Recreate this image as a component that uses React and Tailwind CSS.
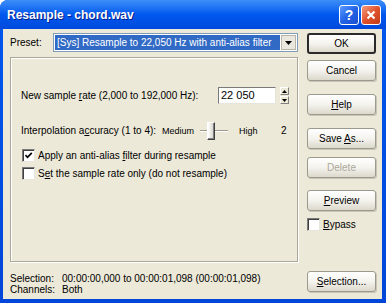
import React from "react";

/* XP-ish push button */
const Btn = ({ children, isDefault, disabled, className = "" }) => (
  <div
    className={`h-[21px] w-[69px] flex items-center justify-center rounded-[3px]
                bg-gradient-to-b from-white via-[#f4f3ee] to-[#dcd8cb]
                ${isDefault ? "border-2 border-[#2a2a2a]" : "border border-[#9c9a8e] shadow-[1px_1px_0_#c9c5b6]"}
                ${disabled ? "text-[#aca899]" : "text-black"} ${className}`}
  >
    {children}
  </div>
);

/* Classic sunken checkbox */
const Check = ({ checked }) => (
  <div className="w-[13px] h-[13px] shrink-0 bg-white border border-t-[#7a7a7a] border-l-[#7a7a7a] border-b-[#e8e6dc] border-r-[#e8e6dc] shadow-[inset_1px_1px_0_#404040] flex items-center justify-center">
    {checked && (
      <svg width="9" height="9" viewBox="0 0 9 9">
        <polyline points="1.5,4.2 3.5,6.3 7.8,1.8" fill="none" stroke="#000" strokeWidth="1.7" />
      </svg>
    )}
  </div>
);

const SpinArrow = ({ up }) => (
  <div className="h-[8px] w-[9px] bg-[#ECE9D8] border border-t-white border-l-white border-b-[#808080] border-r-[#808080] flex items-center justify-center">
    <svg width="5" height="3" viewBox="0 0 5 3">
      <polygon points={up ? "0,3 5,3 2.5,0" : "0,0 5,0 2.5,3"} fill="#000" />
    </svg>
  </div>
);

export default function App() {
  return (
    <div className="w-[386px] h-[303px] bg-white font-['Liberation_Sans',Arial,sans-serif] text-[10px] leading-none text-black">
      <div className="w-full h-full flex flex-col rounded-t-[8px] overflow-hidden bg-gradient-to-b from-[#0058ee] to-[#0046d8]">
        {/* Title bar */}
        <div className="h-[29px] shrink-0 flex items-center justify-between pl-[7px] pr-[5px] bg-gradient-to-b from-[#3c8ef8] via-[#0058ee] to-[#0049dc]">
          <span className="text-white font-bold text-[12px] [text-shadow:1px_1px_0_#0a1e8a]">Resample - chord.wav</span>
          <div className="flex gap-[2px]">
            <div className="w-[20px] h-[20px] rounded-[3px] border border-white bg-gradient-to-br from-[#5d9bff] via-[#2463e6] to-[#1b4fd1] flex items-center justify-center text-white font-bold text-[14px]">
              ?
            </div>
            <div className="w-[20px] h-[20px] rounded-[3px] border border-white bg-gradient-to-br from-[#f39a7a] via-[#e0522c] to-[#c43a16] flex items-center justify-center">
              <svg width="10" height="10" viewBox="0 0 10 10">
                <path d="M1.5 1.5 L8.5 8.5 M8.5 1.5 L1.5 8.5" stroke="#fff" strokeWidth="2.2" />
              </svg>
            </div>
          </div>
        </div>

        {/* Client area */}
        <div className="flex-1 ml-[3px] mr-[4px] mb-[4px] bg-[#ECE9D8] flex">
          {/* Left column */}
          <div className="pl-[7px] pt-[4px] w-[295px] flex flex-col">
            <div className="h-[19px] flex items-center">
              <span className="w-[43px]">Preset:</span>
              <div className="w-[245px] h-[19px] border border-[#7F9DB9] bg-white p-[1px] flex">
                <div className="flex-1 bg-[#316AC5] text-white flex items-center pl-[2px]">
                  [Sys] Resample to 22,050 Hz with anti-alias filter
                </div>
                <div className="w-[15px] ml-[1px] bg-[#e9e7de] border border-[#b9b6a8] flex items-center justify-center">
                  <svg width="7" height="4" viewBox="0 0 7 4">
                    <polygon points="0,0 7,0 3.5,4" fill="#000" />
                  </svg>
                </div>
              </div>
            </div>

            {/* Group box */}
            <div className="mt-[5px] h-[205px] w-[288px] border border-[#aca899] shadow-[1px_1px_0_#fff,inset_1px_1px_0_#fff] pl-[10px] pt-[29px] flex flex-col">
              <div className="h-[17px] flex items-center">
                <span className="w-[197px]">New sample <u>r</u>ate (2,000 to 192,000 Hz):</span>
                <div className="w-[58px] h-[17px] bg-white border border-t-[#7a7a7a] border-l-[#7a7a7a] border-b-[#e8e6dc] border-r-[#e8e6dc] flex items-center pl-[2px] text-[11px]">
                  22 050
                </div>
                <div className="ml-[4px] flex flex-col gap-[1px]">
                  <SpinArrow up />
                  <SpinArrow />
                </div>
              </div>

              <div className="mt-[18px] h-[18px] flex items-center">
                <span className="w-[141px]">Interpolation a<u>c</u>curacy (1 to 4):</span>
                <span className="w-[38px] text-[9px]">Medium</span>
                <div className="relative w-[28px] h-[18px]">
                  <div className="absolute left-0 right-0 top-[8px] h-[2px] border-t border-[#9d9a8c] border-b border-b-white" />
                  <div className="absolute left-[7px] top-0 w-[8px] h-[18px] bg-gradient-to-r from-white to-[#d4d0c8] border border-t-white border-l-white border-b-[#404040] border-r-[#404040] shadow-[inset_-1px_-1px_0_#808080]" />
                </div>
                <span className="ml-[11px] w-[42px] text-[9px]">High</span>
                <span>2</span>
              </div>

              <div className="mt-[9px] h-[13px] flex items-center">
                <div className="ml-[1px]"><Check checked /></div>
                <span className="ml-[3px]">Apply an anti-alias <u>f</u>ilter during resample</span>
              </div>
              <div className="mt-[5px] h-[13px] flex items-center">
                <div className="ml-[1px]"><Check /></div>
                <span className="ml-[3px]">S<u>e</u>t the sample rate only (do not resample)</span>
              </div>
            </div>

            {/* Info */}
            <div className="mt-[11px] leading-[11px]">
              <div className="flex"><span className="w-[52px]">Selection:</span><span>00:00:00,000 to 00:00:01,098 (00:00:01,098)</span></div>
              <div className="flex"><span className="w-[52px]">Channels:</span><span>Both</span></div>
            </div>
          </div>

          {/* Right column */}
          <div className="ml-[9px] pt-[4px] flex flex-col">
            <Btn isDefault>OK</Btn>
            <Btn className="mt-[6px]">Cancel</Btn>
            <Btn className="mt-[13px]"><span><u>H</u>elp</span></Btn>
            <Btn className="mt-[13px]"><span>Save <u>A</u>s...</span></Btn>
            <Btn className="mt-[8px]" disabled>Delete</Btn>
            <Btn className="mt-[12px]"><span><u>P</u>review</span></Btn>
            <div className="mt-[7px] h-[13px] flex items-center">
              <Check />
              <span className="ml-[3px]"><u>B</u>ypass</span>
            </div>
            <Btn className="mt-[40px]"><span><u>S</u>election...</span></Btn>
          </div>
        </div>
      </div>
    </div>
  );
}
